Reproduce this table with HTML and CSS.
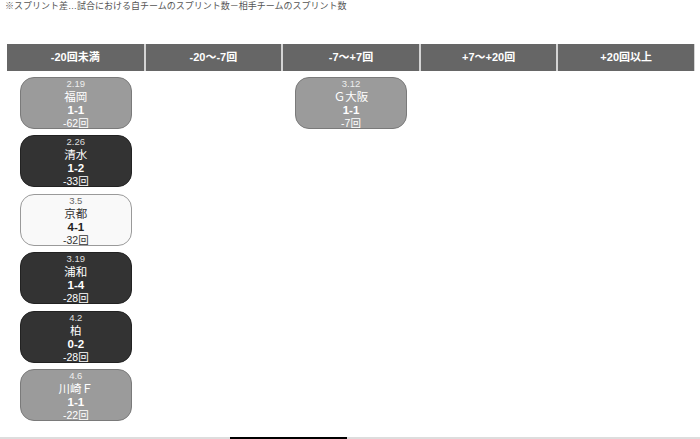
FILE: index.html
```html
<!DOCTYPE html>
<html lang="ja">
<head>
<meta charset="utf-8">
<link rel="stylesheet" href="styles.css">
</head>
<body>
<p class="note">※スプリント差…試合における自チームのスプリント数－相手チームのスプリント数</p>
<div class="table">
  <div class="head">-20回未満</div>
  <div class="head">-20〜-7回</div>
  <div class="head">-7〜+7回</div>
  <div class="head">+7〜+20回</div>
  <div class="head">+20回以上</div>
  <div class="col">
    <div class="card gray"><div class="date">2.19</div><div class="name">福岡</div><div class="score">1-1</div><div class="diff">-62回</div></div>
    <div class="card dark"><div class="date">2.26</div><div class="name">清水</div><div class="score">1-2</div><div class="diff">-33回</div></div>
    <div class="card light"><div class="date">3.5</div><div class="name">京都</div><div class="score">4-1</div><div class="diff">-32回</div></div>
    <div class="card dark"><div class="date">3.19</div><div class="name">浦和</div><div class="score">1-4</div><div class="diff">-28回</div></div>
    <div class="card dark"><div class="date">4.2</div><div class="name">柏</div><div class="score">0-2</div><div class="diff">-28回</div></div>
    <div class="card gray"><div class="date">4.6</div><div class="name">川崎Ｆ</div><div class="score">1-1</div><div class="diff">-22回</div></div>
  </div>
  <div class="col"></div>
  <div class="col">
    <div class="card gray"><div class="date">3.12</div><div class="name">Ｇ大阪</div><div class="score">1-1</div><div class="diff">-7回</div></div>
  </div>
  <div class="col"></div>
  <div class="col"></div>
</div>
<div class="scrollbar"><div class="thumb"></div></div>
</body>
</html>
```

FILE: styles.css
```css
html, body {
  margin: 0;
  padding: 0;
  background: #fff;
  overflow: hidden;
  height: 439px;
  font-family: "Liberation Sans", "Noto Sans CJK JP", sans-serif;
}

.note {
  margin: 0;
  padding: 0 0 0 5px;
  font-size: 9px;
  line-height: 12px;
  color: #555;
  white-space: nowrap;
}

.table {
  margin: 32px 0 0 7px;
  width: 688px;
  display: grid;
  grid-template-columns: repeat(5, 1fr);
}

.head {
  height: 27px;
  box-sizing: border-box;
  background: #666;
  border-left: 1px solid #d4d4d4;
  border-right: 1px solid #d4d4d4;
  color: #fff;
  font-weight: bold;
  font-size: 11px;
  line-height: 27px;
  text-align: center;
}

.head:first-child {
  border-left: none;
}

.col {
  display: flex;
  flex-direction: column;
  align-items: center;
  gap: 6.4px;
  padding-top: 6px;
}

.card {
  width: 112px;
  height: 52px;
  flex: none;
  box-sizing: border-box;
  border: 1px solid;
  border-radius: 14px;
  text-align: center;
  overflow: hidden;
}

.date { font-size: 9.5px; line-height: 12px; }
.name { font-size: 11.5px; line-height: 14px; }
.score { font-size: 11.5px; line-height: 13px; font-weight: bold; }
.diff { font-size: 10.5px; line-height: 12px; }

.gray {
  background: #9b9b9b;
  border-color: #7a7a7a;
  color: #fff;
}
.gray .date { color: #eee; }

.dark {
  background: #333;
  border-color: #222;
  color: #fff;
}
.dark .date { color: #ddd; }

.light {
  background: #f9f9f9;
  border-color: #9a9a9a;
  color: #333;
}
.light .date { color: #666; }
.light .score { color: #222; }

.scrollbar {
  position: fixed;
  left: 0;
  right: 0;
  bottom: 0;
  height: 2px;
  background: #ddd;
}
.thumb {
  margin-left: 230px;
  width: 117px;
  height: 2px;
  background: #000;
}
```
